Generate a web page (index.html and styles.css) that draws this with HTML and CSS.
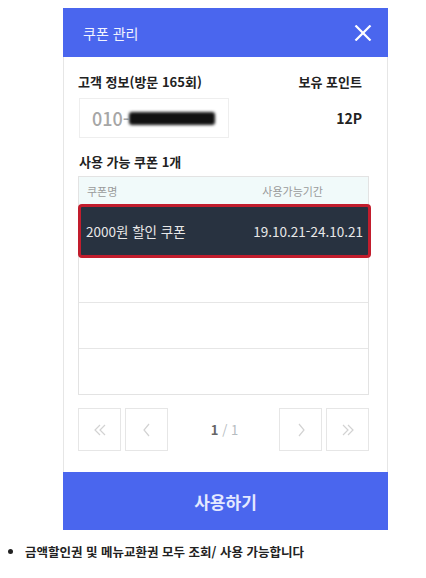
FILE: index.html
```html
<!DOCTYPE html>
<html lang="ko">
<head>
    <meta charset="UTF-8">
    <meta name="viewport" content="width=device-width, initial-scale=1.0">
    <title>쿠폰 관리</title>
    <link rel="stylesheet" href="styles.css">
</head>
<body>

<div class="page">
    <div class="modal">
        <div class="modal-header">
            <span class="modal-title">쿠폰 관리</span>
            <svg class="close" width="18" height="16" viewBox="0 0 18 16">
                <path d="M1.5 0.5 L16.5 15.5 M16.5 0.5 L1.5 15.5" stroke="#fff" stroke-width="2.2" fill="none"/>
            </svg>
        </div>

        <div class="modal-body">
            <div class="info">
                <div class="info-left">
                    <div class="label">고객 정보(방문 165회)</div>
                    <div class="phone">
                        <span class="phone-prefix">010-</span>
                        <span class="redacted"></span>
                    </div>
                </div>
                <div class="info-right">
                    <div class="label">보유 포인트</div>
                    <div class="points">12P</div>
                </div>
            </div>

            <div class="label coupon-count">사용 가능 쿠폰 1개</div>

            <div class="coupon-table">
                <div class="row head">
                    <span>쿠폰명</span>
                    <span>사용가능기간</span>
                </div>
                <div class="row selected">
                    <span>2000원 할인 쿠폰</span>
                    <span>19.10.21-24.10.21</span>
                </div>
                <div class="row empty first"></div>
                <div class="row empty"></div>
                <div class="row empty"></div>
            </div>

            <div class="pager">
                <div class="pager-group">
                    <button class="page-btn">
                        <svg width="16" height="16" viewBox="0 0 16 16"><path d="M8 3 L3 8 L8 13 M13 3 L8 8 L13 13" stroke="#d2d2d2" stroke-width="1.2" fill="none"/></svg>
                    </button>
                    <button class="page-btn">
                        <svg width="16" height="16" viewBox="0 0 16 16"><path d="M10 2 L5 8 L10 14" stroke="#d2d2d2" stroke-width="1.2" fill="none"/></svg>
                    </button>
                </div>
                <div class="page-num"><b>1</b> / 1</div>
                <div class="pager-group">
                    <button class="page-btn">
                        <svg width="16" height="16" viewBox="0 0 16 16"><path d="M6 2 L11 8 L6 14" stroke="#d2d2d2" stroke-width="1.2" fill="none"/></svg>
                    </button>
                    <button class="page-btn">
                        <svg width="16" height="16" viewBox="0 0 16 16"><path d="M3 3 L8 8 L3 13 M8 3 L13 8 L8 13" stroke="#d2d2d2" stroke-width="1.2" fill="none"/></svg>
                    </button>
                </div>
            </div>
        </div>

        <button class="use-btn">사용하기</button>
    </div>

    <ul class="notes">
        <li>금액할인권 및 메뉴교환권 모두 조회/ 사용 가능합니다</li>
    </ul>
</div>

</body>
</html>
```

FILE: styles.css
```css
/* Coupon modal */
body {
    margin: 0;
    padding: 0;
    background: #fff;
    font-family: "Noto Sans CJK KR", "Noto Sans", sans-serif;
    color: #222;
}

.page {
    padding-top: 8px;
}

.modal {
    width: 325px;
    margin-left: 63px;
}

.modal-header {
    height: 49px;
    background: #4a66ee;
    display: flex;
    align-items: center;
    justify-content: space-between;
    padding: 0 16px 0 20px;
}

.modal-title {
    color: #f2f4ff;
    font-size: 14px;
}

.close {
    display: block;
}

.modal-body {
    border-left: 1px solid #e6e6e6;
    border-right: 1px solid #e6e6e6;
    padding: 0 18px 21px 14px;
}

.label {
    font-size: 13px;
    font-weight: bold;
    line-height: 18px;
    color: #222;
}

.info {
    display: flex;
    justify-content: space-between;
    padding-top: 16px;
}

.info-left .label {
    margin-bottom: 7px;
}

.phone {
    width: 150px;
    height: 40px;
    border: 1px solid #eeeeee;
    display: flex;
    align-items: center;
    padding-left: 12px;
    box-sizing: border-box;
    margin-left: 1px;
}

.phone-prefix {
    font-size: 18px;
    font-weight: 500;
    color: #a6a6a6;
}

.redacted {
    display: inline-block;
    width: 86px;
    height: 13px;
    background: #111;
    border-radius: 3px;
    filter: blur(1.5px);
}

.info-right {
    display: flex;
    flex-direction: column;
    align-items: flex-end;
    padding-right: 7px;
}

.points {
    font-size: 14px;
    font-weight: bold;
    line-height: 40px;
    margin-top: 7px;
}

.coupon-count {
    margin-top: 15px;
    margin-bottom: 5px;
    margin-left: 1px;
}

.coupon-table {
    border: 1px solid #e3e3e3;
    width: 289px;
}

.row {
    display: flex;
    justify-content: space-between;
    align-items: center;
}

.row.head {
    height: 27px;
    background: #f1fafa;
    font-size: 11px;
    color: #9a9a9a;
    padding: 0 45px 0 8px;
}

.row.selected {
    height: 48px;
    margin: 0 -3px 0 -1px;
    background: #283240;
    border: 3px solid #c21d2d;
    border-radius: 4px;
    font-size: 13.5px;
    color: #e8e8e8;
    padding: 0 5px 0 5px;
}

.row.empty {
    height: 45px;
    border-top: 1px solid #e6e6e6;
}

.row.empty.first {
    height: 44px;
    border-top: none;
}

.pager {
    display: flex;
    justify-content: space-between;
    align-items: center;
    margin-top: 13px;
    width: 291px;
}

.pager-group {
    display: flex;
    gap: 4px;
}

.page-btn {
    width: 43px;
    height: 43px;
    border: 1px solid #e6e6e6;
    background: #fff;
    padding: 0;
    display: flex;
    align-items: center;
    justify-content: center;
}

.page-num {
    font-size: 13px;
    color: #b5bcc0;
    padding-left: 2px;
}

.page-num b {
    color: #666;
}

.use-btn {
    display: block;
    width: 325px;
    height: 58px;
    border: none;
    background: #4a66ee;
    color: #e4e9ff;
    font-family: inherit;
    font-size: 17px;
    font-weight: bold;
    cursor: pointer;
}

.notes {
    margin: 12px 0 0 0;
    padding-left: 25px;
    font-size: 12.5px;
    font-weight: bold;
    color: #222;
}
```
